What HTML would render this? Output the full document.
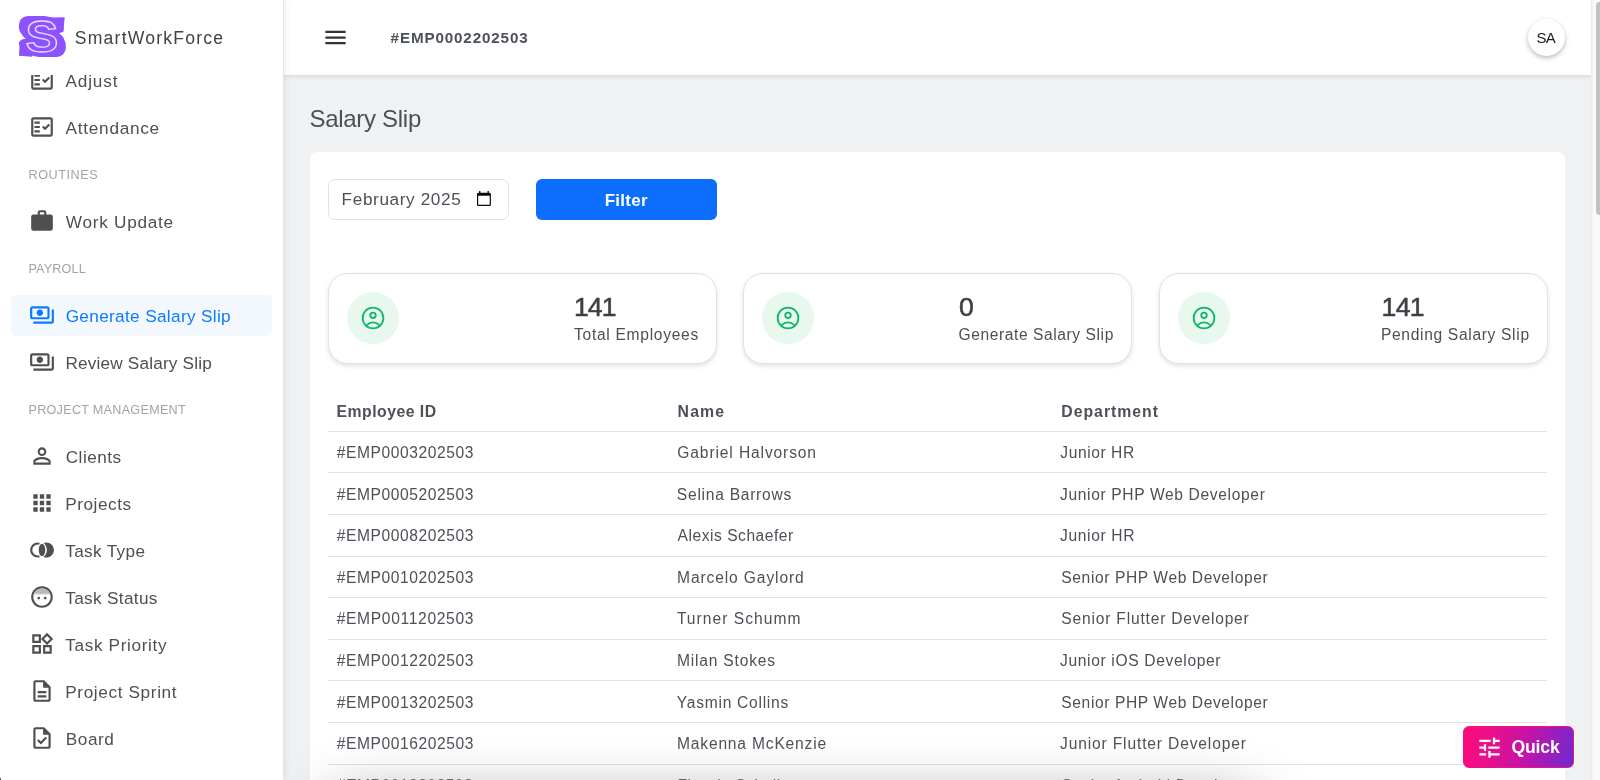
<!DOCTYPE html>
<html lang="en">
<head>
<meta charset="utf-8">
<title>Salary Slip - SmartWorkForce</title>
<style>
*{box-sizing:border-box;margin:0;padding:0}
html,body{width:1600px;height:780px;overflow:hidden}
body{font-family:"Liberation Sans",sans-serif;background:#f0f1f3;color:#4b5157;position:relative}
svg{display:block}
#sidebar,#topbar,#title,#card,#quick{will-change:transform}
/* ---------- sidebar ---------- */
#sidebar{position:absolute;left:0;top:0;width:283px;height:780px;background:#fff;box-shadow:1px 0 0 #e4e5e8,0 0 8px rgba(60,65,75,.16);z-index:5;overflow:hidden}
#brand{position:absolute;left:0;top:0;width:283px;height:75px;background:#fff;z-index:3}
#brand .logo{position:absolute;left:16px;top:12px;width:52px;height:50px}
#brand .name{position:absolute;left:75px;top:26.65px;font-size:17.6px;line-height:22px;color:#3f4247;letter-spacing:.55px;white-space:nowrap}
#menu{position:absolute;left:0;top:0;width:283px;list-style:none}
#menu li{position:absolute;left:11px;width:261px;height:41px;border-radius:5px;white-space:nowrap}
#menu li .ic{position:absolute;left:17.5px;top:6.6px;width:26px;height:26px;fill:#4f4f4f}
#menu li .tx{position:absolute;left:54.5px;top:9.9px;font-size:17.2px;line-height:22px;color:#4f4f4f;letter-spacing:.5px}
#menu li.active{background:#f3f8ff}
#menu li.active .ic{fill:#0d7bff}
#menu li.active .tx{color:#0d7bff}
#menu li.hd{height:20px;left:28px}
#menu li.hd span{position:absolute;left:0;top:.5px;font-size:12.6px;line-height:20px;color:#a3a3a3;letter-spacing:.3px}
/* ---------- topbar ---------- */
#topbar{position:absolute;left:284px;top:0;width:1308px;height:75px;background:#fff;box-shadow:0 1px 5px rgba(60,65,75,.16);z-index:4}
#burger{position:absolute;left:37.6px;top:23.7px;width:27px;height:27px;fill:#333}
#empid{position:absolute;left:106px;top:26.8px;font-size:15.2px;line-height:22px;font-weight:700;color:#4b5157;letter-spacing:.2px;white-space:nowrap}
#avatar{position:absolute;left:1244px;top:18.5px;width:37px;height:37px;border-radius:50%;background:#fff;box-shadow:0 2px 5px rgba(0,0,0,.28);text-align:center;font-size:15px;line-height:37px;color:#1a1a1f}
/* ---------- scrollbar ---------- */
#sbtrack{position:absolute;left:1591px;top:0;width:9px;height:780px;background:linear-gradient(to right,#e9e9e9 0,#f4f4f4 1.5px,#fafafa 4px,#fafafa 100%);z-index:6}
#sbthumb{position:absolute;left:5px;top:2px;width:8px;height:213px;border-radius:3.5px;background:#c1c1c1}
/* ---------- content ---------- */
#title{position:absolute;left:310px;top:104.3px;font-size:24px;line-height:30px;font-weight:400;color:#4b5157;letter-spacing:.1px;white-space:nowrap}
#card{position:absolute;left:310px;top:152px;width:1255px;height:700px;background:#fff;border-radius:7px}
#month{position:absolute;left:18px;top:26.5px;width:181px;height:41px;border:1px solid #dfe1e6;border-radius:7px;background:#fff}
#month span{position:absolute;left:14px;top:8.7px;font-size:17.2px;line-height:22px;color:#4b5157;white-space:nowrap}
#month svg{position:absolute;left:148.1px;top:11.4px;width:13.9px;height:15.2px}
#filter{position:absolute;left:226px;top:26.5px;width:181px;height:41px;border-radius:6px;background:#0d6efd;color:#fff;text-align:center;font-size:17px;line-height:43px;font-weight:700;letter-spacing:.1px}
.stat{position:absolute;top:121px;width:389px;height:91px;border:1px solid #e1e2ea;border-radius:20px;background:#fff;box-shadow:0 2px 4px rgba(70,75,95,.16)}
.stat .bub{position:absolute;left:17.5px;top:18px;width:52px;height:52px;border-radius:50%;background:#e8f8ef}
.stat .bub svg{position:absolute;left:13px;top:13px;width:26px;height:26px;fill:none;stroke:#12b76a;stroke-width:1.85;stroke-linecap:round;stroke-linejoin:round}
.stat .num{position:absolute;top:16.4px;font-size:26.6px;line-height:34px;color:#3c3f44;white-space:nowrap;letter-spacing:.8px;-webkit-text-stroke:.55px #3c3f44}
.stat .lbl{position:absolute;top:49.5px;font-size:15.6px;line-height:22px;color:#4b5157;white-space:nowrap;letter-spacing:.55px}
table{position:absolute;left:18px;top:239px;width:1219px;border-collapse:separate;border-spacing:0;table-layout:fixed}
th,td{padding:0 0 0 9px;text-align:left;font-size:15.6px;line-height:20px;color:#4b5157;border-bottom:1px solid #dfe1e6;white-space:nowrap;letter-spacing:.5px;vertical-align:top}
th{font-weight:700;font-size:15.8px}
#quick{position:absolute;left:1463px;top:726px;width:111px;height:41.5px;border-radius:6px;border:1px solid #f0108a;background:linear-gradient(105deg,#ff0a78 0%,#e90f8d 25%,#c613a5 55%,#8c22c2 85%,#6c2acf 100%);box-shadow:0 0 0 1.2px rgba(255,255,255,.75);z-index:7}
#quick svg{position:absolute;left:12.1px;top:6.6px;width:27px;height:27px;fill:#fff}
#quick span{position:absolute;left:47px;top:8.4px;font-size:17.6px;line-height:24px;color:#fff;font-weight:700;letter-spacing:-.2px;white-space:nowrap}
#fade{position:absolute;left:335px;top:810px;width:915px;height:60px;background:#a0a0a0;box-shadow:0 0 58px 12px rgba(162,162,162,1);z-index:3;border-radius:20px}
#corner{position:absolute;left:0;top:768px;width:6px;height:12px;background:radial-gradient(circle at 24.4px 3px,rgba(0,0,0,0) 24.6px,#000 25.6px);z-index:9}
/*calib*/
#bn{letter-spacing:1.21px!important;transform:translateX(-0.24px)!important;display:inline-block}
#m1{letter-spacing:0.82px!important;transform:translateX(0.06px)!important;display:inline-block}
#m2{letter-spacing:0.74px!important;transform:translateX(0.06px)!important;display:inline-block}
#m3{letter-spacing:0.72px!important;transform:translateX(0.33px)!important;display:inline-block}
#m4{letter-spacing:0.34px!important;transform:translateX(0.13px)!important;display:inline-block}
#m5{letter-spacing:0.18px!important;transform:translateX(-0.1px)!important;display:inline-block}
#m6{letter-spacing:0.48px!important;transform:translateX(0.21px)!important;display:inline-block}
#m7{letter-spacing:0.54px!important;transform:translateX(-0.31px)!important;display:inline-block}
#m8{letter-spacing:0.34px!important;transform:translateX(-0.29px)!important;display:inline-block}
#m9{letter-spacing:0.32px!important;transform:translateX(-0.19px)!important;display:inline-block}
#m10{letter-spacing:0.65px!important;transform:translateX(-0.29px)!important;display:inline-block}
#m11{letter-spacing:0.63px!important;transform:translateX(-0.31px)!important;display:inline-block}
#m12{letter-spacing:0.57px!important;transform:translateX(0.28px)!important;display:inline-block}
#h1{letter-spacing:0.59px!important;transform:translateX(0.46px)!important;display:inline-block}
#h2{letter-spacing:0.18px!important;transform:translateX(0.46px)!important;display:inline-block}
#h3{letter-spacing:0.29px!important;transform:translateX(0.46px)!important;display:inline-block}
#empid{letter-spacing:0.87px!important;transform:translateX(0.56px)!important;display:inline-block}
#av{letter-spacing:-0.55px!important;transform:translateX(-0.65px)!important;display:inline-block}
#title{letter-spacing:-0.29px!important;transform:translateX(-0.56px)!important;display:inline-block}
#mo{letter-spacing:0.61px!important;transform:translateX(-1.38px)!important;display:inline-block}
#ft{letter-spacing:0.27px!important;transform:translateX(-0.26px)!important;display:inline-block}
#n1{letter-spacing:-0.83px!important;transform:translateX(-0.11px)!important;display:inline-block}
#n2{letter-spacing:0.8px!important;transform:translateX(-0.09px)!important;display:inline-block}
#n3{letter-spacing:-0.7px!important;transform:translateX(-0.38px)!important;display:inline-block}
#l1{letter-spacing:0.7px!important;transform:translateX(0.02px)!important;display:inline-block}
#l2{letter-spacing:0.57px!important;transform:translateX(-0.4px)!important;display:inline-block}
#l3{letter-spacing:0.67px!important;transform:translateX(-1.09px)!important;display:inline-block}
#qk{letter-spacing:-0.15px!important;transform:translateX(0.39px)!important;display:inline-block}
#c0_0{letter-spacing:0.47px!important;transform:translateX(-0.47px)!important;display:inline-block}
#c0_1{letter-spacing:1.13px!important;transform:translateX(0.12px)!important;display:inline-block}
#c0_2{letter-spacing:0.98px!important;transform:translateX(-0.17px)!important;display:inline-block}
#c1_0{letter-spacing:0.57px!important;transform:translateX(-0.3px)!important;display:inline-block}
#c1_1{letter-spacing:0.87px!important;transform:translateX(-0.18px)!important;display:inline-block}
#c1_2{letter-spacing:0.58px!important;transform:translateX(-1.24px)!important;display:inline-block}
#c2_0{letter-spacing:0.57px!important;transform:translateX(-0.3px)!important;display:inline-block}
#c2_1{letter-spacing:0.73px!important;transform:translateX(-0.63px)!important;display:inline-block}
#c2_2{letter-spacing:0.64px!important;transform:translateX(-1.51px)!important;display:inline-block}
#c3_0{letter-spacing:0.57px!important;transform:translateX(-0.3px)!important;display:inline-block}
#c3_1{letter-spacing:0.52px!important;transform:translateX(0.1px)!important;display:inline-block}
#c3_2{letter-spacing:0.64px!important;transform:translateX(-1.51px)!important;display:inline-block}
#c4_0{letter-spacing:0.57px!important;transform:translateX(-0.3px)!important;display:inline-block}
#c4_1{letter-spacing:0.88px!important;transform:translateX(-0.48px)!important;display:inline-block}
#c4_2{letter-spacing:0.59px!important;transform:translateX(-0.14px)!important;display:inline-block}
#c5_0{letter-spacing:0.67px!important;transform:translateX(-0.3px)!important;display:inline-block}
#c5_1{letter-spacing:1.03px!important;transform:translateX(-0.62px)!important;display:inline-block}
#c5_2{letter-spacing:0.8px!important;transform:translateX(-0.14px)!important;display:inline-block}
#c6_0{letter-spacing:0.57px!important;transform:translateX(-0.3px)!important;display:inline-block}
#c6_1{letter-spacing:0.79px!important;transform:translateX(-0.48px)!important;display:inline-block}
#c6_2{letter-spacing:0.65px!important;transform:translateX(-1.51px)!important;display:inline-block}
#c7_0{letter-spacing:0.57px!important;transform:translateX(-0.3px)!important;display:inline-block}
#c7_1{letter-spacing:0.72px!important;transform:translateX(-0.63px)!important;display:inline-block}
#c7_2{letter-spacing:0.59px!important;transform:translateX(-0.14px)!important;display:inline-block}
#c8_0{letter-spacing:0.57px!important;transform:translateX(-0.3px)!important;display:inline-block}
#c8_1{letter-spacing:0.81px!important;transform:translateX(-0.48px)!important;display:inline-block}
#c8_2{letter-spacing:0.85px!important;transform:translateX(-1.51px)!important;display:inline-block}
/*endcalib*/
</style>
</head>
<body>
<!-- SIDEBAR -->
<div id="sidebar">
  <ul id="menu">
    <li style="top:60px"><svg class="ic" viewBox="0 0 24 24"><path d="M20 3H4c-1.1 0-2 .9-2 2v14c0 1.1.9 2 2 2h16c1.1 0 2-.9 2-2V5c0-1.1-.9-2-2-2zm0 16H4V5h16v14z"/><path d="M19.41 10.42L17.99 9l-3.17 3.17-1.41-1.42L12 12.16 14.82 15zM5 7h5v2H5zm0 4h5v2H5zm0 4h5v2H5z"/></svg><span class="tx" id="m1">Adjust</span></li>
    <li style="top:107px"><svg class="ic" viewBox="0 0 24 24"><path d="M20 3H4c-1.1 0-2 .9-2 2v14c0 1.1.9 2 2 2h16c1.1 0 2-.9 2-2V5c0-1.1-.9-2-2-2zm0 16H4V5h16v14z"/><path d="M19.41 10.42L17.99 9l-3.17 3.17-1.41-1.42L12 12.16 14.82 15zM5 7h5v2H5zm0 4h5v2H5zm0 4h5v2H5z"/></svg><span class="tx" id="m2">Attendance</span></li>
    <li class="hd" style="top:164.5px"><span id="h1">ROUTINES</span></li>
    <li style="top:201px"><svg class="ic" viewBox="0 0 24 24"><path d="M20 6h-4V4c0-1.11-.89-2-2-2h-4c-1.11 0-2 .89-2 2v2H4c-1.11 0-1.99.89-1.99 2L2 19c0 1.11.89 2 2 2h16c1.11 0 2-.89 2-2V8c0-1.11-.89-2-2-2zm-6 0h-4V4h4v2z"/></svg><span class="tx" id="m3">Work Update</span></li>
    <li class="hd" style="top:258.5px"><span id="h2">PAYROLL</span></li>
    <li class="active" style="top:295px"><svg class="ic" viewBox="0 0 24 24"><path d="M19 14V6c0-1.1-.9-2-2-2H3c-1.1 0-2 .9-2 2v8c0 1.1.9 2 2 2h14c1.1 0 2-.9 2-2zm-2 0H3V6h14v8zm-7-7c-1.66 0-3 1.34-3 3s1.34 3 3 3 3-1.340 3-3-1.340-3-3-3zm13 0v11c0 1.1-.9 2-2 2H4v-2h17V7h2z"/></svg><span class="tx" id="m4">Generate Salary Slip</span></li>
    <li style="top:342px"><svg class="ic" viewBox="0 0 24 24"><path d="M19 14V6c0-1.1-.9-2-2-2H3c-1.1 0-2 .9-2 2v8c0 1.1.9 2 2 2h14c1.1 0 2-.9 2-2zm-2 0H3V6h14v8zm-7-7c-1.66 0-3 1.34-3 3s1.34 3 3 3 3-1.340 3-3-1.340-3-3-3zm13 0v11c0 1.1-.9 2-2 2H4v-2h17V7h2z"/></svg><span class="tx" id="m5">Review Salary Slip</span></li>
    <li class="hd" style="top:399.5px"><span id="h3">PROJECT MANAGEMENT</span></li>
    <li style="top:436px"><svg class="ic" viewBox="0 0 24 24"><path d="M12 5.9c1.160 0 2.100.94 2.100 2.100s-.94 2.100-2.100 2.100S9.900 9.160 9.900 8s.94-2.100 2.100-2.100m0 9c2.970 0 6.100 1.460 6.100 2.100v1.100H5.900V17c0-.64 3.130-2.100 6.100-2.100M12 4C9.790 4 8 5.790 8 8s1.790 4 4 4 4-1.790 4-4-1.790-4-4-4zm0 9c-2.670 0-8 1.340-8 4v3h16v-3c0-2.660-5.330-4-8-4z"/></svg><span class="tx" id="m6">Clients</span></li>
    <li style="top:483px"><svg class="ic" viewBox="0 0 24 24"><path d="M4 8h4V4H4v4zm6 12h4v-4h-4v4zm-6 0h4v-4H4v4zm0-6h4v-4H4v4zm6 0h4v-4h-4v4zm6-10v4h4V4h-4zm-6 4h4V4h-4v4zm6 6h4v-4h-4v4zm0 6h4v-4h-4v4z"/></svg><span class="tx" id="m7">Projects</span></li>
    <li style="top:530px"><svg class="ic" viewBox="0 0 24 24"><defs><mask id="jm"><rect width="24" height="24" fill="#fff"/><circle cx="16.2" cy="12" r="8.7" fill="#000"/></mask></defs><path mask="url(#jm)" fill-rule="evenodd" d="M8 5a7 7 0 1 0 0 14a7 7 0 1 0 0-14zm0 2a5 5 0 1 1 0 10a5 5 0 1 1 0-10z"/><ellipse cx="12" cy="12" rx="3" ry="5.74"/><path d="M16 5c-.9 0-1.750.19-2.530.5C16.270 7.840 16.500 11.030 16.500 12c0 .97-.23 4.160-3.030 6.500.78.31 1.630.5 2.530.5 3.860 0 7-3.140 7-7s-3.140-7-7-7z"/></svg><span class="tx" id="m8">Task Type</span></li>
    <li style="top:577px"><svg class="ic" viewBox="0 0 24 24"><defs><pattern id="fh" width="1.75" height="1.75" patternUnits="userSpaceOnUse"><rect width=".875" height=".875" opacity=".8"/><rect x=".875" y=".875" width=".875" height=".875" opacity=".8"/></pattern></defs><path d="M4.670 8.900A8 8 0 0 1 19.330 8.900z" fill="url(#fh)"/><path d="M4.670 8.900h14.660l-.5 1H5.170z" fill="url(#fh)" opacity=".45"/><path d="M10.250 13c0 .69-.56 1.250-1.250 1.250S7.750 13.690 7.750 13s.56-1.250 1.250-1.250 1.250.56 1.250 1.250zM15 11.750c-.69 0-1.250.56-1.250 1.250s.56 1.250 1.250 1.250 1.250-.56 1.250-1.250-.56-1.250-1.250-1.250zm7 .25c0 5.520-4.480 10-10 10S2 17.520 2 12 6.480 2 12 2s10 4.480 10 10zm-2 0c0-4.410-3.590-8-8-8s-8 3.590-8 8 3.590 8 8 8 8-3.590 8-8z"/></svg><span class="tx" id="m9">Task Status</span></li>
    <li style="top:624px"><svg class="ic" viewBox="0 0 24 24"><path d="M16.660 4.520l2.830 2.830-2.830 2.830-2.830-2.830 2.830-2.830M9 5v4H5V5h4m10 10v4h-4v-4h4M9 15v4H5v-4h4m7.660-13.310L11 7.340 16.660 13l5.660-5.660-5.660-5.650zM11 3H3v8h8V3zm10 10h-8v8h8v-8zm-10 0H3v8h8v-8z"/></svg><span class="tx" id="m10">Task Priority</span></li>
    <li style="top:671px"><svg class="ic" viewBox="0 0 24 24"><path d="M8 16h8v2H8zm0-4h8v2H8zm6-10H6c-1.100 0-2 .9-2 2v16c0 1.100.89 2 1.990 2H18c1.100 0 2-.9 2-2V8l-6-6zm4 18H6V4h7v5h5v11z"/></svg><span class="tx" id="m11">Project Sprint</span></li>
    <li style="top:718px"><svg class="ic" viewBox="0 0 24 24"><path d="M14 2H6c-1.100 0-2 .9-2 2v16c0 1.100.89 2 1.990 2H18c1.100 0 2-.9 2-2V8l-6-6zm4 18H6V4h7v5h5v11zM8.820 13.050L7.400 14.460 10.940 18l5.660-5.660-1.410-1.410-4.240 4.240-2.130-2.120z"/></svg><span class="tx" id="m12">Board</span></li>
  </ul>
  <div id="brand">
    <svg class="logo" viewBox="0 0 52 50" font-family="Liberation Sans, sans-serif" font-weight="700" font-size="43.6" text-anchor="middle">
      <path d="M36 5.600L48.700 5.300L47.300 20.300H36zM4 29.200H16V44.700L2.900 43.800z" fill="#8c52ff"/>
      <rect x="2.900" y="3.900" width="34" height="20.600" rx="9" fill="#8c52ff"/>
      <rect x="15" y="24" width="34.800" height="21" rx="9" fill="#8c52ff"/>
      <text transform="translate(26.2 39.8) scale(1.28 1)" fill="#8c52ff" stroke="#8c52ff" stroke-width="9.600" stroke-linejoin="round">S</text>
      <text transform="translate(25.950 39.8) scale(1.130 1)" fill="#8c52ff" stroke="#eadfff" stroke-width="1.250" stroke-linejoin="round">S</text>
    </svg>
    <div class="name" id="bn">SmartWorkForce</div>
  </div>
</div>
<!-- TOPBAR -->
<div id="topbar">
  <svg id="burger" viewBox="0 0 24 24"><path d="M3 18h18v-2H3v2zm0-5h18v-2H3v2zm0-7v2h18V6H3z"/></svg>
  <div id="empid">#EMP0002202503</div>
  <div id="avatar"><span id="av">SA</span></div>
</div>
<div id="sbtrack"><div id="sbthumb"></div></div>
<!-- CONTENT -->
<h1 id="title">Salary Slip</h1>
<div id="card">
  <div id="month"><span id="mo">February 2025</span><svg viewBox="0 0 14 15.2"><path fill="#0a0a0a" fill-rule="evenodd" d="M2.100 0h1.300v1.700h7.200V0h1.300v1.700h.6a1.500 1.500 0 0 1 1.500 1.500v10.500a1.500 1.500 0 0 1-1.500 1.500h-11A1.500 1.500 0 0 1 0 13.700V3.200a1.500 1.500 0 0 1 1.500-1.500h.6zM1.200 4.800v8.500a.6.6 0 0 0 .6.600h10.400a.6.6 0 0 0 .6-.6V4.800z"/></svg></div>
  <div id="filter"><span id="ft">Filter</span></div>
  <div class="stat" style="left:18px"><div class="bub"><svg viewBox="0 0 26 26"><circle cx="13" cy="13" r="10.35"/><circle cx="13" cy="10.300" r="2.750"/><path d="M6 20.600Q13 14.200 20 20.600"/></svg></div><div class="num" id="n1" style="left:245px">141</div><div class="lbl" id="l1" style="left:245px">Total Employees</div></div>
  <div class="stat" style="left:433px"><div class="bub"><svg viewBox="0 0 26 26"><circle cx="13" cy="13" r="10.35"/><circle cx="13" cy="10.300" r="2.750"/><path d="M6 20.600Q13 14.200 20 20.600"/></svg></div><div class="num" id="n2" style="left:215px">0</div><div class="lbl" id="l2" style="left:215px">Generate Salary Slip</div></div>
  <div class="stat" style="left:849px"><div class="bub"><svg viewBox="0 0 26 26"><circle cx="13" cy="13" r="10.35"/><circle cx="13" cy="10.300" r="2.750"/><path d="M6 20.600Q13 14.200 20 20.600"/></svg></div><div class="num" id="n3" style="left:222px">141</div><div class="lbl" id="l3" style="left:222px">Pending Salary Slip</div></div>
  <table>
    <colgroup><col style="width:340.5px"><col style="width:384px"><col></colgroup>
    <thead><tr style="height:41px"><th style="padding-top:10.6px"><span id="c0_0">Employee ID</span></th><th style="padding-top:10.6px"><span id="c0_1">Name</span></th><th style="padding-top:10.6px"><span id="c0_2">Department</span></th></tr></thead>
    <tbody>
      <tr style="height:41px"><td style="padding-top:10.9px"><span id="c1_0">#EMP0003202503</span></td><td style="padding-top:10.9px"><span id="c1_1">Gabriel Halvorson</span></td><td style="padding-top:10.9px"><span id="c1_2">Junior HR</span></td></tr>
      <tr style="height:42px"><td style="padding-top:11.5px"><span id="c2_0">#EMP0005202503</span></td><td style="padding-top:11.5px"><span id="c2_1">Selina Barrows</span></td><td style="padding-top:11.5px"><span id="c2_2">Junior PHP Web Developer</span></td></tr>
      <tr style="height:42px"><td style="padding-top:11.1px"><span id="c3_0">#EMP0008202503</span></td><td style="padding-top:11.1px"><span id="c3_1">Alexis Schaefer</span></td><td style="padding-top:11.1px"><span id="c3_2">Junior HR</span></td></tr>
      <tr style="height:41px"><td style="padding-top:10.7px"><span id="c4_0">#EMP0010202503</span></td><td style="padding-top:10.7px"><span id="c4_1">Marcelo Gaylord</span></td><td style="padding-top:10.7px"><span id="c4_2">Senior PHP Web Developer</span></td></tr>
      <tr style="height:42px"><td style="padding-top:11.3px"><span id="c5_0">#EMP0011202503</span></td><td style="padding-top:11.3px"><span id="c5_1">Turner Schumm</span></td><td style="padding-top:11.3px"><span id="c5_2">Senior Flutter Developer</span></td></tr>
      <tr style="height:41px"><td style="padding-top:10.9px"><span id="c6_0">#EMP0012202503</span></td><td style="padding-top:10.9px"><span id="c6_1">Milan Stokes</span></td><td style="padding-top:10.9px"><span id="c6_2">Junior iOS Developer</span></td></tr>
      <tr style="height:42px"><td style="padding-top:11.5px"><span id="c7_0">#EMP0013202503</span></td><td style="padding-top:11.5px"><span id="c7_1">Yasmin Collins</span></td><td style="padding-top:11.5px"><span id="c7_2">Senior PHP Web Developer</span></td></tr>
      <tr style="height:42px"><td style="padding-top:11.1px"><span id="c8_0">#EMP0016202503</span></td><td style="padding-top:11.1px"><span id="c8_1">Makenna McKenzie</span></td><td style="padding-top:11.1px"><span id="c8_2">Junior Flutter Developer</span></td></tr>
      <tr style="height:41px"><td style="padding-top:10.7px"><span id="c9_0">#EMP0018202503</span></td><td style="padding-top:10.7px"><span id="c9_1">Flossie Schulist</span></td><td style="padding-top:10.7px"><span id="c9_2">Senior Android Developer</span></td></tr>
      <tr style="height:42px"><td style="padding-top:11.3px"><span id="c10_0">#EMP0019202503</span></td><td style="padding-top:11.3px"><span id="c10_1">Darien Kessler</span></td><td style="padding-top:11.3px"><span id="c10_2">Junior PHP Web Developer</span></td></tr>
    </tbody>
  </table>
</div>
<div id="fade"></div>
<div id="corner"></div>
<div id="quick">
  <svg viewBox="0 0 24 24"><path d="M3 17v2h6v-2H3zM3 5v2h10V5H3zm10 16v-2h8v-2h-8v-2h-2v6h2zM7 9v2H3v2h4v2h2V9H7zm14 4v-2H11v2h10zm-6-4h2V7h4V5h-4V3h-2v6z"/></svg>
  <span id="qk">Quick</span>
</div>
</body>
</html>
